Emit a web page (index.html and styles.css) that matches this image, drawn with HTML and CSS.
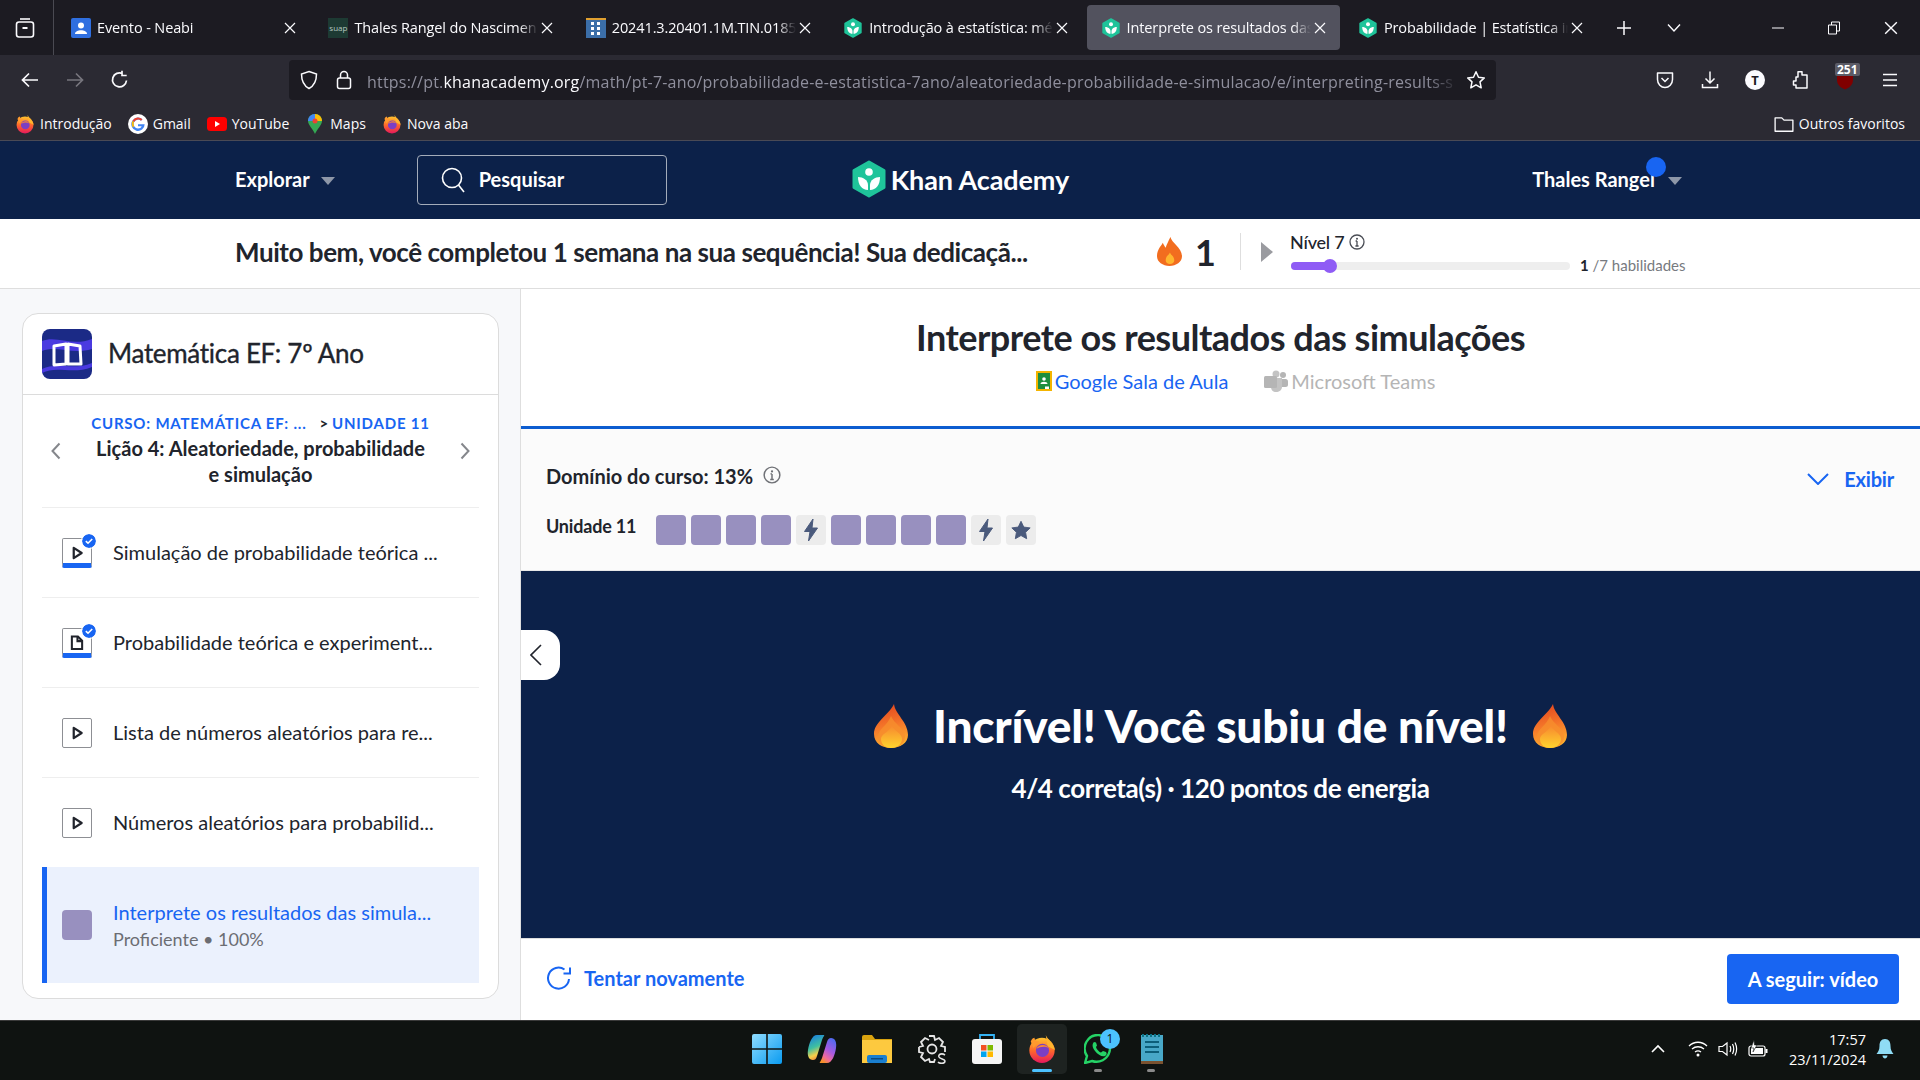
FILE: index.html
```html
<!DOCTYPE html>
<html lang="pt">
<head>
<meta charset="utf-8">
<title>Interprete os resultados das simulações</title>
<link rel="stylesheet" href="styles.css">
</head>
<body>
<svg class="defs" width="0" height="0">
  <defs>
    <linearGradient id="flameG" x1="0.4" y1="0" x2="0.6" y2="1"><stop offset="0" stop-color="#e4471f"/><stop offset=".5" stop-color="#f5792a"/><stop offset="1" stop-color="#ffb52e"/></linearGradient>
    <linearGradient id="flameI" x1="0.5" y1="0" x2="0.5" y2="1"><stop offset="0" stop-color="#f78a2e"/><stop offset="1" stop-color="#ffd42e"/></linearGradient>
    <linearGradient id="ffG" x1="0.5" y1="0" x2="0.5" y2="1"><stop offset="0" stop-color="#ffc22e"/><stop offset=".5" stop-color="#ff6a2a"/><stop offset="1" stop-color="#e5185d"/></linearGradient>
    <linearGradient id="winG" x1="0" y1="0" x2="1" y2="1"><stop offset="0" stop-color="#8fdcff"/><stop offset="1" stop-color="#0a9bf0"/></linearGradient>
    <linearGradient id="copL" x1="0.2" y1="0" x2="0.5" y2="1"><stop offset="0" stop-color="#1a7de0"/><stop offset=".5" stop-color="#3fc0a0"/><stop offset=".8" stop-color="#f5d04a"/><stop offset="1" stop-color="#f08a3a"/></linearGradient>
    <linearGradient id="copR" x1="0.8" y1="0" x2="0.3" y2="1"><stop offset="0" stop-color="#4a6af0"/><stop offset=".5" stop-color="#a85ae0"/><stop offset=".8" stop-color="#f06a9a"/><stop offset="1" stop-color="#f5902a"/></linearGradient>
    <symbol id="ka" viewBox="0 0 38 38"><path d="M19 2 L34 10.5 V27.5 L19 36 L4 27.5 V10.5Z" fill="#1fc49a" stroke="#1fc49a" stroke-width="3" stroke-linejoin="round"/><circle cx="19" cy="12" r="3.8" fill="#fff"/><path d="M8 17 C8 25 12 30 18 30 V25 C18 20 13 17 8 17Z" fill="#fff"/><path d="M30 17 C30 25 26 30 20 30 V25 C20 20 25 17 30 17Z" fill="#fff"/></symbol>
    <symbol id="ff" viewBox="0 0 32 32"><circle cx="16" cy="17.5" r="13.5" fill="url(#ffG)"/><path d="M20 1 C22 6 28 9 30 17 L22 13Z" fill="#ffb52e"/><path d="M4 8 C5 5 7 4 8 4 C8 7 10 8 13 8 L7 15Z" fill="#ff9a2e"/><circle cx="16.5" cy="17.5" r="7" fill="#7b3fc4"/><path d="M10 16 C12 11 20 10 23 15 C20 13 14 13 10 16Z" fill="#ff8a2e"/></symbol>
    <symbol id="flame" viewBox="0 0 34 44"><path d="M20 0 C21 10 34 18 34 31 C34 39 26 44 17 44 C8 44 0 39 0 30 C0 18 14 12 20 0Z" fill="url(#flameG)"/><path d="M17 12 C20 20 31 24 31 33 C31 40 24 44 17 44 C10 44 4 40 4 33 C4 25 13 22 17 12Z" fill="#f7902e" opacity=".75"/><path d="M18 22 C20 27 28 29 28 35 C28 40 23 44 17 44 C11 44 7 40 7 35 C7 30 15 28 18 22Z" fill="url(#flameI)"/></symbol>
    <symbol id="close" viewBox="0 0 12 12"><path d="M1 1 L11 11 M11 1 L1 11" stroke="#fbfbfe" stroke-width="1.2" fill="none"/></symbol>
    <symbol id="play" viewBox="0 0 30 30"><path d="M11.5 9.5 L20 15 L11.5 20.5Z" fill="#fff" stroke="#21242c" stroke-width="2.4" stroke-linejoin="round"/></symbol>
    <symbol id="check" viewBox="0 0 14 14"><circle cx="7" cy="7" r="7" fill="#1865f2"/><path d="M3.8 7.2 L6 9.2 L10.2 5" stroke="#fff" stroke-width="1.6" fill="none"/></symbol>
    <symbol id="info" viewBox="0 0 16 16"><circle cx="8" cy="8" r="7" fill="none" stroke="currentColor" stroke-width="1.3"/><circle cx="8" cy="4.8" r="1" fill="currentColor"/><path d="M8 7 V12 M6.6 7 H8 M6.4 12 H9.6" stroke="currentColor" stroke-width="1.3" fill="none"/></symbol>
    <symbol id="bolt" viewBox="0 0 16 24"><path d="M10 1 L1.5 13.5 H7 L5.5 23 L14.5 10 H9Z" fill="#4a5a7c" stroke="#4a5a7c" stroke-linejoin="round"/></symbol>
    <symbol id="star" viewBox="0 0 24 24"><path d="M12 2.5 L15 8.8 L22 9.7 L17 14.5 L18.2 21.5 L12 18 L5.8 21.5 L7 14.5 L2 9.7 L9 8.8Z" fill="#4a5a7c" stroke="#4a5a7c" stroke-linejoin="round"/></symbol>
  </defs>
</svg>

<header class="tabbar">
  <svg class="tab-all" width="20" height="22" viewBox="0 0 20 22"><rect x="1.5" y="5" width="17" height="15" rx="2.5" fill="none" stroke="#fbfbfe" stroke-width="1.6"/><path d="M5 2 H15" stroke="#fbfbfe" stroke-width="1.6"/><rect x="7.5" y="10" width="5" height="2" fill="#fbfbfe"/></svg>
  <span class="tab-sep"></span>
  <div class="tabs">
    <div class="tab"><svg class="fav" viewBox="0 0 20 20"><rect width="20" height="20" rx="2" fill="#2f6fe0"/><circle cx="10" cy="7.5" r="3" fill="#fff"/><path d="M4 16 C4 11 16 11 16 16Z" fill="#fff"/></svg><span class="tab-label">Evento - Neabi</span><svg class="tab-x"><use href="#close"/></svg></div>
    <div class="tab"><span class="fav suap">suap</span><span class="tab-label">Thales Rangel do Nascimen</span><svg class="tab-x"><use href="#close"/></svg></div>
    <div class="tab"><svg class="fav" viewBox="0 0 20 20"><rect width="20" height="20" fill="#3b6ea8"/><rect y="0" width="20" height="2" fill="#e0a030"/><path d="M5 4 H8 V7 H5Z M11 4 H14 V7 H11Z M5 9 H8 V12 H5Z M11 9 H14 V12 H11Z M5 14 H8 V17 H5Z M11 14 H14 V17 H11Z" fill="#fff"/></svg><span class="tab-label">20241.3.20401.1M.TIN.0185#</span><svg class="tab-x"><use href="#close"/></svg></div>
    <div class="tab"><svg class="fav"><use href="#ka"/></svg><span class="tab-label">Introdução à estatística: mé</span><svg class="tab-x"><use href="#close"/></svg></div>
    <div class="tab tab-active"><svg class="fav"><use href="#ka"/></svg><span class="tab-label">Interprete os resultados das</span><svg class="tab-x"><use href="#close"/></svg></div>
    <div class="tab"><svg class="fav"><use href="#ka"/></svg><span class="tab-label">Probabilidade | Estatística in</span><svg class="tab-x"><use href="#close"/></svg></div>
  </div>
  <svg class="tab-plus" width="16" height="16" viewBox="0 0 16 16"><path d="M8 1 V15 M1 8 H15" stroke="#fbfbfe" stroke-width="1.5"/></svg>
  <svg class="tab-more" width="14" height="10" viewBox="0 0 14 10"><path d="M1 1.5 L7 8 L13 1.5" stroke="#fbfbfe" stroke-width="1.4" fill="none"/></svg>
  <div class="winctl">
    <svg width="12" height="12" viewBox="0 0 12 12"><path d="M0 6 H12" stroke="#fbfbfe"/></svg>
    <svg width="14" height="14" viewBox="0 0 14 14"><path d="M1.5 4 H9.5 V13 H1.5Z M4.5 4 V1 H12.5 V10 H9.5" fill="none" stroke="#fbfbfe"/></svg>
    <svg width="14" height="14"><use href="#close"/></svg>
  </div>
</header>

<nav class="toolbar">
  <svg class="tool tool-back" viewBox="0 0 20 20"><path d="M18 10 H3 M9 3.5 L2.5 10 L9 16.5" stroke="#fbfbfe" stroke-width="1.7" fill="none"/></svg>
  <svg class="tool tool-fwd" viewBox="0 0 20 20"><path d="M2 10 H17 M11 3.5 L17.5 10 L11 16.5" stroke="#77767e" stroke-width="1.7" fill="none"/></svg>
  <svg class="tool tool-reload" viewBox="0 0 20 20"><path d="M16.5 10.5 A7 7 0 1 1 12.5 3.5 M12 0.8 V5.5 H16.7" stroke="#fbfbfe" stroke-width="1.7" fill="none"/></svg>
  <div class="urlbar">
    <svg class="url-ic" viewBox="0 0 20 20"><path d="M10 1.5 L17.5 4 C17.5 11 15.5 15.5 10 18.5 C4.5 15.5 2.5 11 2.5 4Z" fill="none" stroke="#fbfbfe" stroke-width="1.5"/></svg>
    <svg class="url-ic" viewBox="0 0 20 20"><rect x="3.5" y="8" width="13" height="10.5" rx="2" fill="none" stroke="#fbfbfe" stroke-width="1.5"/><path d="M6.5 8 V5 A3.5 3.5 0 0 1 13.5 5 V8" fill="none" stroke="#fbfbfe" stroke-width="1.5"/></svg>
    <span class="url-text">https://pt.<b class="url-host">khanacademy.org</b>/math/pt-7-ano/probabilidade-e-estatistica-7ano/aleatoriedade-probabilidade-e-simulacao/e/interpreting-results-s</span>
    <svg class="url-ic" viewBox="0 0 20 20"><path d="M10 1.8 L12.5 7.2 L18.3 7.9 L14 11.9 L15.2 17.8 L10 14.8 L4.8 17.8 L6 11.9 L1.7 7.9 L7.5 7.2Z" fill="none" stroke="#fbfbfe" stroke-width="1.5" stroke-linejoin="round"/></svg>
  </div>
  <div class="toolset">
    <svg class="tool" viewBox="0 0 20 20"><path d="M2.5 3 H17.5 V9.5 C17.5 14 14 17.5 10 17.5 C6 17.5 2.5 14 2.5 9.5Z" fill="none" stroke="#fbfbfe" stroke-width="1.5" stroke-linejoin="round"/><path d="M6.5 8 L10 11.5 L13.5 8" fill="none" stroke="#fbfbfe" stroke-width="1.5"/></svg>
    <svg class="tool" viewBox="0 0 20 20"><path d="M10 1.5 V13 M5.5 8.5 L10 13 L14.5 8.5 M2.5 14 V17.5 H17.5 V14" fill="none" stroke="#fbfbfe" stroke-width="1.5"/></svg>
    <span class="avatar-t">T</span>
    <svg class="tool" viewBox="0 0 20 20"><path d="M8 1.8 H12 V5 H17 V18 H6 V15 H3.5 V11 H6 V7 H8Z" fill="none" stroke="#fbfbfe" stroke-width="1.5" stroke-linejoin="round"/></svg>
    <span class="ublock"><svg width="18" height="20" viewBox="0 0 18 20"><path d="M1 2 H17 V10 C17 15 13 18 9 19.5 C5 18 1 15 1 10Z" fill="#800000"/></svg><span class="ublock-badge">251</span></span>
    <svg class="tool" viewBox="0 0 20 20"><path d="M3 4.5 H17 M3 10 H17 M3 15.5 H17" stroke="#fbfbfe" stroke-width="1.6"/></svg>
  </div>
</nav>

<div class="bookmarks">
  <a class="bm"><svg class="bm-ic"><use href="#ff"/></svg>Introdução</a>
  <a class="bm"><svg class="bm-ic" viewBox="0 0 18 18"><circle cx="9" cy="9" r="9" fill="#fff"/><path d="M14.5 9.2 H9 V11 H12.3 C11.8 12.4 10.6 13 9 13 A4 4 0 1 1 11.7 6 L13 4.7 A6 6 0 1 0 15 9.2Z" fill="#4285f4"/><path d="M4.1 6.1 A5.7 5.7 0 0 1 13 4.7 L11.7 6 A4 4 0 0 0 5.5 7.2Z" fill="#ea4335"/><path d="M3.4 9 A5.7 5.7 0 0 0 4.4 12.2 L5.6 11 A4 4 0 0 1 5.4 7.2 L4.1 6.1 A5.7 5.7 0 0 0 3.4 9Z" fill="#fbbc05"/></svg>Gmail</a>
  <a class="bm"><svg class="bm-ic" viewBox="0 0 20 14"><rect width="20" height="14" rx="3.5" fill="#f00"/><path d="M8 4 L13 7 L8 10Z" fill="#fff"/></svg>YouTube</a>
  <a class="bm"><svg class="bm-ic" viewBox="0 0 14 20"><path d="M7 0 C3 0 0 3 0 7 C0 11 5 15 7 20 C9 15 14 11 14 7 C14 3 11 0 7 0Z" fill="#34a853"/><path d="M7 0 C3 0 0 3 0 7 L7 7Z" fill="#4285f4"/><path d="M7 0 L7 7 L14 7 C14 3 11 0 7 0Z" fill="#fbbc05"/><circle cx="7" cy="7" r="2.5" fill="#ea4335"/></svg>Maps</a>
  <a class="bm"><svg class="bm-ic"><use href="#ff"/></svg>Nova aba</a>
  <a class="bm bm-other"><svg class="bm-ic" viewBox="0 0 18 18"><path d="M1 3.5 H7 L9 5.5 H17 V15.5 H1Z" fill="none" stroke="#fbfbfe" stroke-width="1.2" stroke-linejoin="round"/></svg>Outros favoritos</a>
</div>

<div class="kanav">
  <span class="nav-link">Explorar</span><span class="nav-caret"></span>
  <div class="search">
    <svg class="search-ic" width="24" height="26" viewBox="0 0 24 26"><circle cx="11" cy="11" r="9.5" fill="none" stroke="#fff" stroke-width="1.6"/><path d="M17.5 18 L23 25" stroke="#fff" stroke-width="1.6"/></svg>
    <span>Pesquisar</span>
  </div>
  <div class="logo"><svg width="38" height="38"><use href="#ka"/></svg><span class="logo-text">Khan Academy</span></div>
  <div class="user"><span class="nav-link">Thales Rangel</span><span class="user-dot"></span><span class="nav-caret"></span></div>
</div>

<div class="banner">
  <p class="banner-msg">Muito bem, você completou 1 semana na sua sequência! Sua dedicaçã...</p>
  <svg class="banner-flame" viewBox="0 0 26 30"><path d="M14 0 C15 6 26 11 26 20 C26 26 20 30 13 30 C6 30 0 26 0 20 C0 13 4 10 6 6 C7 8 8 10 9 11 C10 8 12 4 14 0Z" fill="#f26d1f"/><path d="M13.5 16 C14.5 19 18 20 18 24 C18 26.500 16 28 13.500 28 C11 28 9 26.500 9 24 C9 20 12 19 13.500 16Z" fill="#ffb52e"/></svg>
  <span class="streak">1</span>
  <span class="banner-sep"></span>
  <svg class="banner-tri" width="12" height="20" viewBox="0 0 12 20"><path d="M0 0 L12 10 L0 20Z" fill="#9a9ba0"/></svg>
  <div class="level">
    <div class="level-name">Nível 7 <svg class="level-info"><use href="#info"/></svg></div>
    <div class="level-track"><span class="level-fill"></span><span class="level-knob"></span></div>
  </div>
  <span class="level-count"><b>1</b> /7 habilidades</span>
</div>

<main class="main">
  <aside class="sidebar">
    <section class="card">
      <div class="card-head">
        <svg class="course-ic" viewBox="0 0 50 50"><rect width="50" height="50" rx="8" fill="#1b2a86"/><path d="M0 12 C15 6 30 18 50 10 V20 C30 26 15 16 0 22Z" fill="#4a3ae0"/><path d="M0 40 C15 32 30 42 50 34 V38 C30 46 15 36 0 44Z" fill="#4a3ae0"/><path d="M12 17 L24 15 V35 L12 36Z M26 15 L38 17 L39 35 L26 35Z" fill="none" stroke="#fff" stroke-width="3" stroke-linejoin="round"/></svg>
        <h2 class="course-name">Matemática EF: 7º Ano</h2>
      </div>
      <div class="lesson-head">
        <svg class="arrow" viewBox="0 0 10 18"><path d="M8.500 1.500 L1.500 9 L8.500 16.500" fill="none" stroke="#85878c" stroke-width="2"/></svg>
        <div class="lesson-mid">
          <div class="crumbs"><span>CURSO: MATEMÁTICA EF: ...</span><i class="crumb-sep">&gt;</i><span>UNIDADE 11</span></div>
          <h3 class="lesson-title">Lição 4: Aleatoriedade, probabilidade e simulação</h3>
        </div>
        <svg class="arrow" viewBox="0 0 10 18"><path d="M1.500 1.500 L8.500 9 L1.500 16.500" fill="none" stroke="#85878c" stroke-width="2"/></svg>
      </div>
      <ul class="items">
        <li class="item"><span class="ibox ibox-done"><svg class="ibox-svg"><use href="#play"/></svg><svg class="ibox-check"><use href="#check"/></svg></span><span class="item-text">Simulação de probabilidade teórica ...</span></li>
        <li class="item"><span class="ibox ibox-done"><svg class="ibox-svg" viewBox="0 0 30 30"><path d="M9.500 8 H16 L20.500 12.500 V21.500 H9.500Z" fill="none" stroke="#21242c" stroke-width="2.200"/><path d="M15.500 8 V13 H20.500" fill="none" stroke="#21242c" stroke-width="2.200"/></svg><svg class="ibox-check"><use href="#check"/></svg></span><span class="item-text">Probabilidade teórica e experiment...</span></li>
        <li class="item"><span class="ibox"><svg class="ibox-svg"><use href="#play"/></svg></span><span class="item-text">Lista de números aleatórios para re...</span></li>
        <li class="item"><span class="ibox"><svg class="ibox-svg"><use href="#play"/></svg></span><span class="item-text">Números aleatórios para probabilid...</span></li>
        <li class="item item-active"><span class="mastery-box"></span><span class="item-stack"><span class="item-text item-link">Interprete os resultados das simula...</span><span class="item-sub">Proficiente • 100%</span></span></li>
      </ul>
    </section>
  </aside>

  <div class="content">
    <div class="ex-head">
      <h1 class="ex-title">Interprete os resultados das simulações</h1>
      <div class="share">
        <span class="share-link"><svg width="16" height="20" viewBox="0 0 16 20"><rect width="16" height="20" fill="#f4b400"/><rect x="2" y="2" width="12" height="16" fill="#1e8e3e"/><circle cx="8" cy="8" r="1.800" fill="#fff"/><path d="M4.500 13 C4.500 10 11.500 10 11.500 13Z" fill="#fff"/><rect x="9" y="15.500" width="4" height="2.500" fill="#fff"/></svg>Google Sala de Aula</span>
        <span class="share-link share-off"><svg width="24" height="22" viewBox="0 0 24 22"><circle cx="19" cy="5" r="3" fill="#b5b5b5"/><circle cx="12" cy="4" r="3.500" fill="#c3c3c3"/><rect x="14" y="9" width="10" height="8" rx="2.500" fill="#b5b5b5"/><path d="M7 8 H18 V17 C18 20 15 22 12 22 C9 22 7 20 7 17Z" fill="#c3c3c3"/><rect x="0" y="6" width="13" height="12" rx="1.500" fill="#b5b5b5"/></svg>Microsoft Teams</span>
      </div>
    </div>

    <div class="mastery">
      <div class="mastery-top">
        <span class="mastery-label">Domínio do curso: 13%</span>
        <svg class="mastery-info"><use href="#info"/></svg>
        <span class="show"><svg width="22" height="12" viewBox="0 0 22 12"><path d="M1 1 L11 11 L21 1" fill="none" stroke="#1865f2" stroke-width="2"/></svg>Exibir</span>
      </div>
      <div class="mastery-row">
        <span class="unit">Unidade 11</span>
        <div class="squares">
          <span class="sq sq-p"></span><span class="sq sq-p"></span><span class="sq sq-p"></span><span class="sq sq-p"></span>
          <span class="sq sq-g"><svg class="sq-bolt"><use href="#bolt"/></svg></span>
          <span class="sq sq-p"></span><span class="sq sq-p"></span><span class="sq sq-p"></span><span class="sq sq-p"></span>
          <span class="sq sq-g"><svg class="sq-bolt"><use href="#bolt"/></svg></span>
          <span class="sq sq-g"><svg class="sq-star"><use href="#star"/></svg></span>
        </div>
      </div>
    </div>

    <div class="result">
      <button class="collapse"><svg width="12" height="22" viewBox="0 0 12 22"><path d="M11 1 L1 11 L11 21" fill="none" stroke="#21242c" stroke-width="1.600"/></svg></button>
      <div class="result-head">
        <svg class="flame"><use href="#flame"/></svg>
        <h2 class="result-title">Incrível! Você subiu de nível!</h2>
        <svg class="flame"><use href="#flame"/></svg>
      </div>
      <p class="result-sub">4/4 correta(s) · 120 pontos de energia</p>
    </div>

    <div class="actions">
      <span class="retry"><svg width="24" height="24" viewBox="0 0 24 24"><path d="M22 13 A10.500 10.500 0 1 1 17.500 3.500 M23 1.500 V7.500 H16.500" fill="none" stroke="#1865f2" stroke-width="2"/></svg>Tentar novamente</span>
      <button class="next">A seguir: vídeo</button>
    </div>
  </div>
</main>

<footer class="taskbar">
  <div class="tb-icons">
    <span class="slot"><svg width="30" height="30" viewBox="0 0 30 30"><path d="M0 2 A2 2 0 0 1 2 0 H14.200 V14.200 H0Z M15.800 0 H28 A2 2 0 0 1 30 2 V14.200 H15.800Z M0 15.800 H14.200 V30 H2 A2 2 0 0 1 0 28Z M15.800 15.800 H30 V28 A2 2 0 0 1 28 30 H15.800Z" fill="url(#winG)"/></svg></span>
    <span class="slot"><svg width="30" height="30" viewBox="0 0 30 30"><path d="M10 1 H17 C18 1 16 3 15 6 L10 22 C9 25 8 26 6 26 C2 26 0 22 1 16 C2 9 5 1 10 1Z" fill="url(#copL)"/><path d="M20 29 H13 C12 29 14 27 15 24 L20 8 C21 5 22 4 24 4 C28 4 30 8 29 14 C28 21 25 29 20 29Z" fill="url(#copR)"/></svg></span>
    <span class="slot"><svg width="30" height="28" viewBox="0 0 30 28"><path d="M0 2 A2 2 0 0 1 2 0 H10 L13 4 H30 V8 H0Z" fill="#d9a30f"/><rect y="5" width="30" height="23" fill="#fdc93f"/><rect x="5" y="20" width="20" height="8" rx="2" fill="#1a7fd0"/><rect x="9" y="23" width="12" height="1.500" fill="#0c4a80"/></svg></span>
    <span class="slot"><svg width="30" height="30" viewBox="0 0 30 30"><path d="M12 2 H17 L18 6 L22 4 L26 8 L24 12 L28 13 V18" fill="none" stroke="#e6e6e6" stroke-width="1.800"/><path d="M2 13 L6 12 L4 8 L8 4 L12 6 M2 13 V18 L6 19 L4 23 L8 27 L12 25 L13 28 H17 L18 25" fill="none" stroke="#e6e6e6" stroke-width="1.800"/><circle cx="15" cy="15" r="4.500" fill="none" stroke="#e6e6e6" stroke-width="1.800"/><path d="M28 21 C25 19 21 20 22 23 C23 25 28 25 28 27 C28 30 23 30 21 28" fill="none" stroke="#e6e6e6" stroke-width="1.600"/></svg></span>
    <span class="slot"><svg width="30" height="30" viewBox="0 0 30 30"><path d="M8 5 V1 H22 V5" fill="none" stroke="#35b4f5" stroke-width="1.800"/><rect y="5" width="30" height="25" rx="3" fill="#f5f5f5"/><rect x="9" y="11" width="5.500" height="5.500" fill="#f25022"/><rect x="15.500" y="11" width="5.500" height="5.500" fill="#7fba00"/><rect x="9" y="17.500" width="5.500" height="5.500" fill="#00a4ef"/><rect x="15.500" y="17.500" width="5.500" height="5.500" fill="#ffb900"/></svg></span>
    <span class="slot slot-on"><svg width="30" height="30"><use href="#ff"/></svg></span>
    <span class="slot slot-run slot-wa"><svg width="30" height="30" viewBox="0 0 30 30"><path d="M15 1 A13.500 13.500 0 1 1 8 27 L1 29 L3 22 A13.500 13.500 0 0 1 15 1Z" fill="#0f1311" stroke="#25d366" stroke-width="2.400"/><path d="M10 8 C8 10 8 13 11 17 C14 21 18 23 21 22 C23 21 23 19 22 18 L19 17 L17 18.500 C15 18 12.500 15 12 13 L13 11.500 L12 8.500Z" fill="#25d366"/></svg><span class="tb-badge">1</span></span>
    <span class="slot slot-run slot-np"><svg width="22" height="30" viewBox="0 0 22 30"><rect y="1" width="22" height="29" fill="#48a8c8"/><path d="M2 0 V3 M6 0 V3 M10 0 V3 M14 0 V3 M18 0 V3" stroke="#0b7285" stroke-width="2"/><path d="M4 8 H18 M4 13 H18 M4 18 H18" stroke="#0d5f7a" stroke-width="2"/><rect y="27" width="22" height="3" fill="#7a5230"/></svg></span>
  </div>
  <div class="tray">
    <svg class="tray-caret" width="14" height="10" viewBox="0 0 14 10"><path d="M1 8 L7 2 L13 8" fill="none" stroke="#fff" stroke-width="1.600"/></svg>
    <svg class="tray-ic" width="20" height="16" viewBox="0 0 20 16"><path d="M1 5 C6 0 14 0 19 5 M4 8 C7.500 5 12.500 5 16 8 M7 11 C9 9.500 11 9.500 13 11" fill="none" stroke="#fff" stroke-width="1.300"/><circle cx="10" cy="14" r="1.500" fill="#fff"/></svg>
    <svg class="tray-ic" width="20" height="16" viewBox="0 0 20 16"><path d="M1 5.500 H4.500 L9 2 V14 L4.500 10.500 H1Z" fill="none" stroke="#fff" stroke-width="1.200"/><path d="M12 5 C13 7 13 9 12 11 M14.500 3 C16 6 16 10 14.500 13 M17 1.500 C19 5.500 19 10.500 17 14.500" fill="none" stroke="#fff" stroke-width="1.200"/></svg>
    <svg class="tray-ic" width="20" height="18" viewBox="0 0 20 18"><rect x="1" y="6" width="16" height="10" rx="2" fill="none" stroke="#fff" stroke-width="1.200"/><rect x="3" y="8" width="12" height="6" fill="#fff"/><rect x="17.500" y="9" width="2" height="4" fill="#fff"/><path d="M6 0 L3 8 H6 L5 12 L9 5 H6.500Z" fill="#fff" stroke="#0f1311" stroke-width=".6"/></svg>
    <div class="clock"><span>17:57</span><span>23/11/2024</span></div>
    <svg class="tray-bell" width="18" height="20" viewBox="0 0 18 20"><path d="M9 0 C5 0 3.500 3 3.500 7 C3.500 11 2 13 0.500 15 H17.500 C16 13 14.500 11 14.500 7 C14.500 3 13 0 9 0Z M6.500 16.500 H11.500 C11.500 18.500 10 19.500 9 19.500 C8 19.500 6.500 18.500 6.500 16.500Z" fill="#8fdcf5"/></svg>
  </div>
</footer>
</body>
</html>
```
FILE: styles.css
```css
* { box-sizing: border-box; }
html, body { margin: 0; padding: 0; }
body {
  width: 1920px; height: 1080px; overflow: hidden;
  display: flex; flex-direction: column;
  font-family: "Lato", "Liberation Sans", sans-serif;
  color: #21242c; background: #fff;
}
h1, h2, h3, p, ul { margin: 0; padding: 0; }
ul { list-style: none; }
b { font-weight: inherit; }
.defs { position: absolute; }

/* browser chrome */
.tabbar { height: 55px; background: #1c1b22; display: flex; align-items: center; color: #fbfbfe; font-family: "Open Sans", "Noto Sans", sans-serif; flex: none; }
.tab-all { margin-left: 15px; flex: none; }
.tab-sep { width: 1px; height: 55px; background: #4a4a52; margin: 0 3px 0 18px; flex: none; }
.tabs { display: flex; gap: 4.4px; width: 1520px; flex: none; }
.tab { width: 253px; height: 45px; display: flex; align-items: center; padding: 0 14px; border-radius: 4px; flex: none; }
.tab-active { background: #52525e; }
.fav { width: 20px; height: 20px; flex: none; margin-right: 6px; }
.suap { background: #1d3a33; color: #b7c7c0; font-size: 8px; line-height: 20px; text-align: center; overflow: hidden; }
.tab-label { flex: 1; min-width: 0; font-size: 14.5px; letter-spacing: -.12px; white-space: nowrap; -webkit-mask-image: linear-gradient(90deg, #000 90%, transparent); mask-image: linear-gradient(90deg, #000 90%, transparent); }
.tab-x { width: 12px; height: 12px; flex: none; margin-left: 3px; }
.tab-plus { margin-left: 39px; flex: none; }
.tab-more { margin-left: 35px; flex: none; }
.winctl { display: flex; align-items: center; gap: 43px; margin-left: auto; margin-right: 22px; }

.toolbar { height: 55px; background: #2b2a33; display: flex; align-items: center; padding-bottom: 5px; flex: none; }
.tool { width: 20px; height: 20px; flex: none; }
.tool-back { margin-left: 20px; }
.tool-fwd { margin-left: 25px; }
.tool-reload { margin-left: 25px; }
.urlbar { margin-left: 159px; width: 1207px; height: 40px; background: #1c1b22; border-radius: 4px; display: flex; align-items: center; padding: 0 10px; gap: 15px; }
.url-ic { width: 20px; height: 20px; flex: none; }
.url-text { flex: 1; min-width: 0; margin: 3px -8px 0 -2px; font-family: "Open Sans", sans-serif; font-size: 16px; letter-spacing: .2px; color: #8f8f9d; white-space: nowrap; overflow: hidden; -webkit-mask-image: linear-gradient(90deg, #000 97%, transparent); mask-image: linear-gradient(90deg, #000 97%, transparent); }
.url-host { color: #fbfbfe; }
.toolset { display: flex; align-items: center; gap: 25px; margin-left: 159px; }
.avatar-t { width: 20px; height: 20px; border-radius: 50%; background: #fbfbfe; color: #1c1b22; font: 700 13px/20px "Open Sans", sans-serif; text-align: center; }
.ublock { position: relative; width: 20px; height: 20px; display: flex; justify-content: center; }
.ublock-badge { position: absolute; top: -7px; left: 0; background: #5b5b66; color: #fff; font: 700 12px/13px "Open Sans", sans-serif; padding: 0 2px; border-radius: 2px; }

.bookmarks { height: 30px; background: #2b2a33; display: flex; align-items: center; padding: 0 15px 3px 15px; color: #fbfbfe; font: 14px "Open Sans", sans-serif; flex: none; }
.bm { display: flex; align-items: center; margin-right: 16px; white-space: nowrap; }
.bm-ic { width: 20px; height: 20px; flex: none; margin-right: 5px; }
.bm-other { margin-left: auto; margin-right: 0; }

/* Khan nav */
.kanav { height: 79px; background: #0c2149; border-top: 1px solid #4a4a55; color: #fff; display: flex; align-items: center; padding: 0 0 2px 235px; flex: none; }
.nav-link { font-size: 20px; font-weight: 700; }
.nav-caret { width: 0; height: 0; border-left: 7px solid transparent; border-right: 7px solid transparent; border-top: 8px solid #8e97a8; margin: 3px 0 0 11px; }
.user .nav-caret { margin-left: 13px; }
.search { margin: 2px 0 0 82px; width: 250px; height: 50px; border: 1px solid #a4acba; border-radius: 4px; display: flex; align-items: center; padding: 0 0 2px 23px; gap: 14px; font-size: 20px; font-weight: 700; }
.search-ic { margin-top: 2px; }
.logo { margin-left: 183px; display: flex; align-items: center; gap: 3px; }
.logo-text { font-size: 27px; font-weight: 700; letter-spacing: -.1px; }
.user { margin-left: 463px; display: flex; align-items: center; position: relative; }
.user-dot { position: absolute; left: 114px; top: -10px; width: 20px; height: 20px; border-radius: 50%; background: #1865f2; }

/* banner */
.banner { height: 70px; background: #fff; border-bottom: 1px solid #dedede; display: flex; align-items: center; padding: 0 0 4px 235px; flex: none; }
.banner-msg { width: 922px; font-size: 26px; font-weight: 700; letter-spacing: -.43px; white-space: nowrap; }
.banner-flame { width: 25px; height: 29px; flex: none; }
.streak { font-size: 36px; font-weight: 700; margin-left: 13px; width: 45px; }
.banner-sep { width: 1px; height: 37px; background: #dedede; }
.banner-tri { margin-left: 20px; flex: none; }
.level { margin: -6px 0 0 17px; width: 280px; padding-top: 2px; }
.level-name { font-size: 18px; font-weight: 500; letter-spacing: -.2px; display: flex; align-items: center; gap: 4px; height: 24px; }
.level-info { width: 16px; height: 16px; color: #4a4d55; }
.level-track { height: 8px; margin: 8px 0 0 1px; background: #eee; border-radius: 4px; position: relative; }
.level-fill { display: block; width: 39px; height: 8px; background: #8f5cf5; border-radius: 4px; }
.level-knob { position: absolute; left: 32px; top: -3px; width: 14px; height: 14px; border-radius: 50%; background: #8f5cf5; }
.level-count { margin: 26px 0 0 10px; font-size: 15px; color: #777a80; white-space: nowrap; }
.level-count b { color: #21242c; font-weight: 700; }

/* main */
.main { height: 731px; display: flex; flex: none; }
.sidebar { width: 521px; background: #f7f8fa; border-right: 1px solid #dedede; padding: 24px 22px 0; flex: none; }
.card { width: 477px; height: 686px; background: #fff; border: 1px solid #dcdcdc; border-radius: 16px; }
.card-head { height: 81px; border-bottom: 1px solid #dcdcdc; display: flex; align-items: center; padding-left: 19px; gap: 16px; }
.course-ic { width: 50px; height: 50px; flex: none; }
.course-name { font-size: 26px; font-weight: 400; letter-spacing: -.3px; -webkit-text-stroke: .35px #21242c; padding-bottom: 2px; }
.lesson-head { height: 112px; display: flex; align-items: center; padding: 0 28px; }
.arrow { width: 10px; height: 18px; flex: none; }
.lesson-mid { flex: 1; text-align: center; padding-bottom: 2px; }
.crumbs { font-size: 15px; font-weight: 700; color: #1865f2; letter-spacing: .8px; white-space: nowrap; display: flex; justify-content: center; }
.crumb-sep { font-style: normal; color: #21242c; margin: 0 3px 0 13px; }
.lesson-title { font-size: 20px; line-height: 26px; font-weight: 700; margin: 3px 30px 0; }
.items { margin: 0 19px; }
.item { height: 90px; border-top: 1px solid #eee; display: flex; align-items: center; padding-left: 20px; }
.ibox { width: 30px; height: 30px; border: 1px solid #8d8f94; border-radius: 2px; position: relative; flex: none; }
.ibox-done { border-bottom: 5px solid #1865f2; }
.ibox-svg { position: absolute; left: 0; top: 0; width: 28px; height: 28px; }
.ibox-check { position: absolute; right: -5px; top: -5px; width: 14px; height: 14px; border-radius: 50%; box-shadow: 0 0 0 1px #fff; }
.item-text { margin: 0 0 2px 21px; font-size: 20px; white-space: nowrap; color: #21242c; }
.item-active { height: 116px; background: #ebf1fd; padding-left: 15px; border-left: 5px solid #1865f2; border-top: 0; }
.mastery-box { width: 30px; height: 30px; background: #9890bf; border-radius: 4px; flex: none; }
.item-stack { display: flex; flex-direction: column; }
.item-link { color: #1865f2; }
.item-sub { margin: 2px 0 0 21px; font-size: 18px; color: #6b6d73; }

.content { flex: 1; min-width: 0; display: flex; flex-direction: column; }
.ex-head { height: 140px; border-bottom: 3px solid #0c5dd0; text-align: center; padding-top: 23px; }
.ex-title { font-size: 36px; line-height: 50px; font-weight: 700; letter-spacing: -.5px; }
.share { display: flex; justify-content: center; gap: 36px; margin-top: 5px; padding-left: 30px; font-size: 20px; line-height: 28px; }
.share-link { color: #1865f2; display: flex; align-items: center; gap: 3px; }
.share-off { color: #b5b5b5; }
.mastery { height: 142px; background: #fbfbfb; border-bottom: 1px solid #e8e8e8; padding: 25px 26px 0 25px; }
.mastery-top { display: flex; align-items: center; height: 44px; }
.mastery-label { font-size: 20px; font-weight: 700; }
.mastery-info { width: 18px; height: 18px; margin: -3px 0 0 10px; color: #6f7176; }
.show { margin: 5px 0 0 auto; display: flex; align-items: center; gap: 15px; color: #1865f2; font-size: 20px; font-weight: 700; letter-spacing: -.2px; }
.mastery-row { display: flex; align-items: center; height: 30px; margin-top: 17px; }
.unit { width: 110px; font-size: 18px; font-weight: 700; letter-spacing: -.2px; margin-top: -9px; }
.squares { display: flex; gap: 5px; }
.sq { width: 30px; height: 30px; border-radius: 4px; display: flex; align-items: center; justify-content: center; }
.sq-p { background: #9890bf; }
.sq-g { background: #ececec; }
.sq-bolt { width: 16px; height: 24px; }
.sq-star { width: 22px; height: 22px; }
.result { height: 367px; background: #0c2149; color: #fff; position: relative; display: flex; flex-direction: column; align-items: center; justify-content: center; padding-bottom: 8px; }
.collapse { position: absolute; left: 0; top: 59px; width: 39px; height: 50px; background: #fff; border: 0; border-radius: 0 16px 16px 0; display: flex; align-items: center; padding: 0 0 0 9px; }
.result-head { display: flex; align-items: center; gap: 25px; }
.flame { width: 34px; height: 44px; flex: none; }
.result-title { font-size: 46px; font-weight: 900; letter-spacing: -.2px; line-height: 60px; }
.result-sub { font-size: 26px; font-weight: 700; letter-spacing: -.43px; line-height: 36px; margin-top: 14px; }
.actions { flex: 1; background: #fff; border-top: 1px solid #dedede; display: flex; align-items: center; padding: 0 21px 1px 26px; }
.retry { display: flex; align-items: center; gap: 13px; color: #1865f2; font-size: 20px; font-weight: 700; margin-bottom: 2px; }
.next { margin-left: auto; width: 172px; height: 50px; background: #1865f2; border: 0; border-radius: 4px; color: #fff; font: 700 20px "Lato", sans-serif; }

/* taskbar */
.taskbar { height: 60px; background: #0f1311; border-top: 1px solid #3a3a3a; display: flex; align-items: center; padding-bottom: 3px; color: #fff; flex: none; }
.tb-icons { display: flex; margin-left: 739px; }
.slot { width: 55px; height: 50px; display: flex; align-items: center; justify-content: center; position: relative; border-radius: 5px; }
.slot-on { background: #1e2321; width: 50px; margin: 0 2.500px; }
.slot-on::after { content: ""; position: absolute; bottom: 2px; left: 15px; width: 20px; height: 3px; border-radius: 2px; background: #4cc2ff; }
.slot-run::after { content: ""; position: absolute; bottom: 2px; left: 23px; width: 8px; height: 3px; border-radius: 2px; background: #8a8a8a; }
.slot-wa { margin-left: 2px; margin-right: -2px; }
.tb-badge { position: absolute; top: 5px; right: 6px; width: 20px; height: 20px; border-radius: 50%; background: #4cc2ff; color: #0f1311; font: 12px/20px "Open Sans", sans-serif; text-align: center; }
.tray { margin-left: auto; display: flex; align-items: center; padding-right: 26px; }
.tray-ic { margin-left: 10px; }
.tray-caret { margin-right: 13px; }
.clock { display: flex; flex-direction: column; align-items: flex-end; margin: 2px 0 0 21px; font: 14.5px/20px "Open Sans", sans-serif; }
.tray-bell { margin-left: 10px; }
```
